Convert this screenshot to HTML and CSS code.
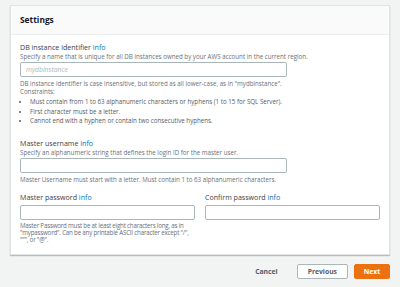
FILE: index.html
```html
<!DOCTYPE html>
<html lang="en">
  <head>
    <meta charset="UTF-8" />
    <title>Settings</title>
    <link rel="stylesheet" href="styles.css">
  </head>
  <body>
    <div class="panel">
      <div class="panel-header">Settings</div>
      <div class="panel-body">
        <div class="field first">
          <div class="label">DB instance identifier <a class="info">info</a></div>
          <div class="desc">Specify a name that is unique for all DB instances owned by your AWS account in the current region.</div>
          <input class="input wide" placeholder="mydbinstance">
          <div class="note">
            DB instance identifier is case insensitive, but stored as all lower-case, as in "mydbinstance".<br>
            Constraints:
          </div>
          <ul class="rules">
            <li>Must contain from 1 to 63 alphanumeric characters or hyphens (1 to 15 for SQL Server).</li>
            <li>First character must be a letter.</li>
            <li>Cannot end with a hyphen or contain two consecutive hyphens.</li>
          </ul>
        </div>

        <div class="field">
          <div class="label">Master username <a class="info">info</a></div>
          <div class="desc">Specify an alphanumeric string that defines the login ID for the master user.</div>
          <input class="input wide">
          <div class="note">Master Username must start with a letter. Must contain 1 to 63 alphanumeric characters.</div>
        </div>

        <div class="field-row">
          <div class="field">
            <div class="label">Master password <a class="info">info</a></div>
            <input class="input spaced">
            <div class="note">Master Password must be at least eight characters long, as in "mypassword". Can be any printable ASCII character except "/", """, or "@".</div>
          </div>
          <div class="field">
            <div class="label">Confirm password <a class="info">info</a></div>
            <input class="input spaced">
          </div>
        </div>
      </div>
    </div>

    <div class="actions">
      <button class="btn link">Cancel</button>
      <button class="btn">Previous</button>
      <button class="btn primary">Next</button>
    </div>
  </body>
</html>
```

FILE: styles.css
```css
body {
  margin: 0;
  padding: 5px 10px;
  background-color: #f2f3f3;
  font-family: "Open Sans", Arial, sans-serif;
  color: #444;
}

.panel {
  background-color: white;
  border: 1px solid #e1e4e4;
  box-shadow: 0 1px 1px rgba(0, 28, 36, 0.25);
}

.panel-header {
  height: 28px;
  line-height: 28px;
  padding: 0 9px;
  background-color: #fafafa;
  border-bottom: 1px solid #eaeded;
  font-size: 8.4px;
  font-weight: bold;
  color: #16191f;
}

.panel-body {
  padding: 7px 9px 11px;
}

.field {
  margin-bottom: 9px;
}

.field.first {
  margin-bottom: 12px;
}

.label {
  font-size: 7.1px;
  line-height: 11px;
  color: #3d4145;
}

.info {
  color: #0073bb;
}

.desc,
.note {
  font-size: 6.2px;
  line-height: 8px;
  color: #687078;
}

.note {
  margin-top: 3px;
  line-height: 7.5px;
}

.input {
  display: block;
  box-sizing: border-box;
  width: 100%;
  height: 15px;
  margin: 1px 0 0;
  padding: 0 5px;
  border: 1px solid #aab7b8;
  border-radius: 2px;
  font-family: inherit;
  font-size: 6.8px;
  font-style: italic;
}

.input.spaced {
  margin-top: 2px;
}

.input::placeholder {
  color: #aab7b8;
}

.wide {
  width: 267px;
}

.field-row .note {
  margin-top: 2px;
  line-height: 7px;
  letter-spacing: -0.2px;
}

.rules {
  margin: 2px 0 0;
  padding-left: 10px;
  font-size: 6.2px;
  line-height: 9.5px;
  color: #545b64;
}

.field-row {
  display: grid;
  grid-template-columns: 175px 175px;
  gap: 10px;
}

.field-row .field {
  margin-bottom: 0;
}

.actions {
  display: flex;
  justify-content: flex-end;
  align-items: center;
  gap: 6px;
  padding-top: 9px;
}

.btn {
  height: 15px;
  padding: 0 10px;
  border: 1px solid #aab7b8;
  border-radius: 2px;
  background-color: white;
  font-family: inherit;
  font-size: 6.8px;
  font-weight: bold;
  color: #545b64;
}

.btn.link {
  border: none;
  background: none;
  margin-right: 3px;
}

.btn.primary {
  width: 36px;
  padding: 0;
  background-color: #ec7211;
  border-color: #ec7211;
  color: white;
}
```
